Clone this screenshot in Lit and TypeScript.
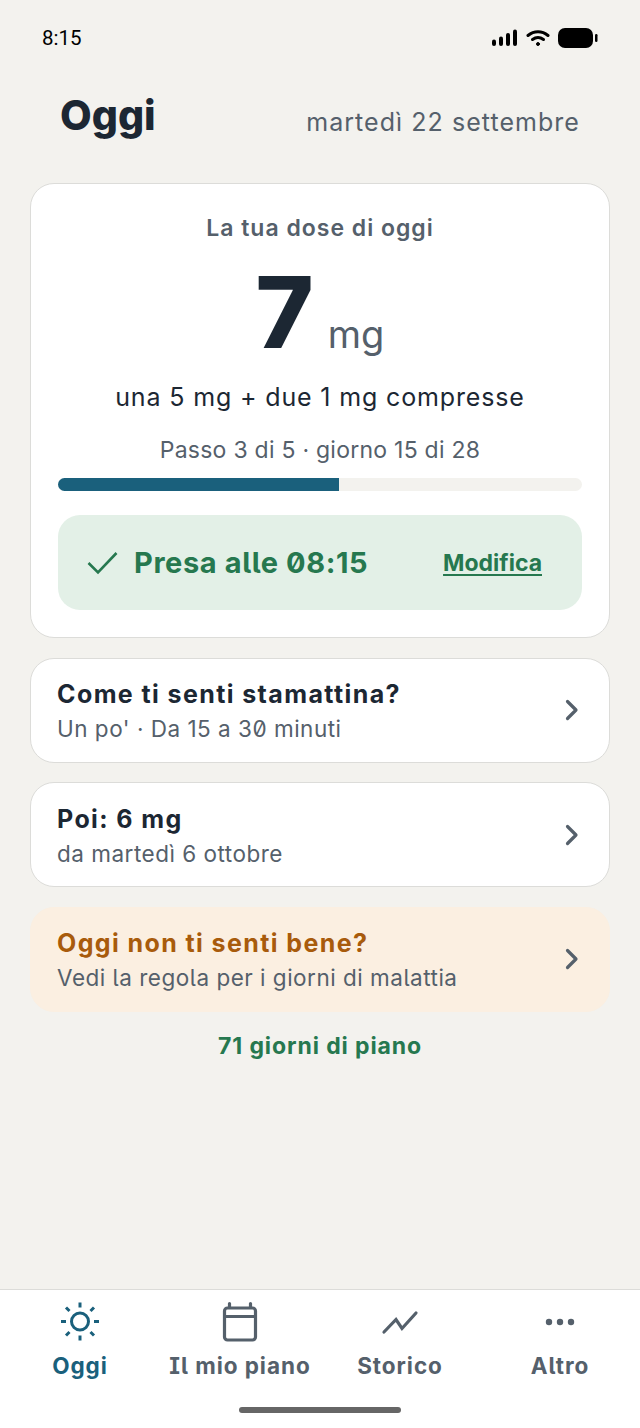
import { css, html, LitElement } from 'lit';
import { customElement } from 'lit/decorators.js';

const chevron = html`<svg class="chevron" viewBox="0 0 14 22" width="14" height="22" fill="none" stroke="#55606b" stroke-width="3.200" stroke-linecap="round" stroke-linejoin="round"><path d="M2.500 2.500 11 11l-8.500 8.500"/></svg>`;

@customElement('app-root')
export class AppRoot extends LitElement {
  static override styles = css`
    :host {
      display: block;
      width: 640px;
      height: 1428px;
      background: #f3f2ee;
      font-family: Inter, 'Liberation Sans', sans-serif;
      font-feature-settings: 'ss02', 'cv05', 'cv08', 'zero';
      color: #1c2733;
    }

    .page {
      height: 100%;
      display: flex;
      flex-direction: column;
    }

    .status {
      height: 76px;
      flex: none;
      padding: 0 42px;
      display: flex;
      align-items: center;
      justify-content: space-between;
      color: #000;
      font: 400 20.500px Roboto, sans-serif;
      font-feature-settings: normal;
    }

    .status-icons {
      display: flex;
      align-items: center;
      gap: 8px;
      margin-left: -1px;
    }

    .header {
      flex: none;
      height: 107px;
      padding: 0 60px;
      display: flex;
      align-items: center;
      justify-content: space-between;
    }

    .header h1 {
      margin: -30px 0 0 0;
      font-size: 41px;
      font-weight: 800;
      font-feature-settings: normal;
    }

    .date {
      margin-top: -16px;
      font-size: 25px;
      letter-spacing: 1.050px;
      color: #55606b;
    }

    .content {
      flex: 1;
      padding: 0 30px;
      display: flex;
      flex-direction: column;
      gap: 19.500px;
    }

    .card {
      background: #fff;
      border: 1.500px solid #dcdcd9;
      border-radius: 24px;
      box-sizing: border-box;
    }

    .dose {
      height: 455px;
      padding: 0 27px;
      display: flex;
      flex-direction: column;
      align-items: stretch;
      text-align: center;
    }

    .dose-title {
      margin-top: 28px;
      font-size: 23px;
      line-height: 32px;
      font-weight: 600;
      letter-spacing: 1px;
      color: #55606b;
    }

    .amount {
      margin-top: 22px;
      height: 92px;
      display: flex;
      justify-content: center;
      align-items: baseline;
      gap: 14px;
      line-height: 92px;
    }

    .amount b {
      font-size: 99px;
      font-weight: 800;
    }

    .amount span {
      font-size: 38px;
      color: #55606b;
    }

    .pills {
      margin-top: 22px;
      font-size: 25px;
      line-height: 34px;
      letter-spacing: 0.850px;
    }

    .step {
      margin-top: 20px;
      font-size: 23px;
      line-height: 32px;
      letter-spacing: 0.250px;
      color: #55606b;
    }

    .track {
      margin-top: 12px;
      height: 13px;
      border-radius: 7px;
      background: #f3f2ee;
      overflow: hidden;
    }

    .fill {
      height: 100%;
      background: #1a607c;
    }

    .taken {
      margin-top: 24px;
      height: 95px;
      border-radius: 22px;
      background: #e3f0e7;
      padding: 0 40px 0 27px;
      display: flex;
      align-items: center;
      color: #26784f;
    }

    .taken svg {
      flex: none;
    }

    .taken strong {
      margin-left: 16px;
      font-size: 29px;
      font-weight: 700;
      letter-spacing: 0.600px;
    }

    .taken a {
      margin-left: auto;
      font-size: 23px;
      font-weight: 700;
      text-decoration: underline;
      text-underline-offset: 3px;
    }

    .row {
      height: 105px;
      padding: 2px 30px 0 26px;
      display: flex;
      align-items: center;
      justify-content: space-between;
    }

    .chevron {
      margin-top: -2px;
    }

    .row-title {
      font-size: 25px;
      line-height: 34px;
      font-weight: 700;
      letter-spacing: 1.400px;
    }

    .row-sub {
      margin-top: 2px;
      font-size: 22.500px;
      line-height: 32px;
      letter-spacing: 0.500px;
      color: #55606b;
    }

    .warn {
      background: #fbefe1;
      border-color: #fbefe1;
    }

    .warn .row-title {
      color: #a85b0c;
    }

    .plan {
      margin-top: -1px;
      text-align: center;
      font-size: 23px;
      line-height: 32px;
      font-weight: 700;
      letter-spacing: 0.900px;
      color: #26784f;
    }

    nav {
      flex: none;
      height: 139px;
      box-sizing: border-box;
      background: #fff;
      border-top: 1.500px solid #dcdcd9;
      position: relative;
      display: grid;
      grid-template-columns: repeat(4, 1fr);
    }

    .tab {
      padding-top: 10px;
      display: flex;
      flex-direction: column;
      align-items: center;
      font-size: 22.500px;
      line-height: 30px;
      font-weight: 700;
      letter-spacing: 0.950px;
      color: #55606b;
    }

    .tab svg {
      height: 44px;
      width: 44px;
      margin-bottom: 7px;
    }

    .tab.active {
      color: #1a607c;
    }

    .home-bar {
      position: absolute;
      left: 239px;
      bottom: 15px;
      width: 162px;
      height: 6px;
      border-radius: 3px;
      background: #666;
    }
  `;

  override render() {
    return html`
      <div class="page">
        <div class="status">
          <span>8:15</span>
          <span class="status-icons">
            <svg width="27" height="18" viewBox="0 0 27 18" fill="#000"><rect x="1" y="10.500" width="4" height="6.500" rx="2"/><rect x="8" y="7.500" width="4" height="9.500" rx="2"/><rect x="15" y="4" width="4" height="13" rx="2"/><rect x="22" y="0.500" width="4" height="16.500" rx="2"/></svg>
            <svg width="24" height="18" viewBox="0 0 24 18" fill="none" stroke="#000" stroke-width="3" stroke-linecap="round"><path d="M2 6.500c6-5 14-5 20 0"/><path d="M6.500 10.500c3.300-2.500 7.700-2.500 11 0"/><circle cx="12" cy="15" r="1.500" fill="#000" stroke-width="1"/></svg>
            <svg width="40" height="20" viewBox="0 0 40 20" fill="#000"><rect x="0" y="0" width="35" height="20" rx="7"/><rect x="37" y="6" width="2.500" height="8" rx="1.200"/></svg>
          </span>
        </div>
        <header class="header">
          <h1>Oggi</h1>
          <span class="date">martedì 22 settembre</span>
        </header>
        <main class="content">
          <section class="card dose">
            <div class="dose-title">La tua dose di oggi</div>
            <div class="amount"><b>7</b><span>mg</span></div>
            <div class="pills">una 5 mg + due 1 mg compresse</div>
            <div class="step">Passo 3 di 5 · giorno 15 di 28</div>
            <div class="track"><div class="fill" style="width: ${(15 / 28) * 100}%"></div></div>
            <div class="taken">
              <svg width="33" height="26" viewBox="0 0 33 26" fill="none" stroke="#26784f" stroke-width="2.600"><path d="M3.500 13l9.500 9.500L31.500 3"/></svg>
              <strong>Presa alle 08:15</strong>
              <a>Modifica</a>
            </div>
          </section>
          <section class="card row">
            <div>
              <div class="row-title">Come ti senti stamattina?</div>
              <div class="row-sub">Un po' · Da 15 a 30 minuti</div>
            </div>
            ${chevron}
          </section>
          <section class="card row">
            <div>
              <div class="row-title">Poi: 6 mg</div>
              <div class="row-sub">da martedì 6 ottobre</div>
            </div>
            ${chevron}
          </section>
          <section class="card row warn">
            <div>
              <div class="row-title">Oggi non ti senti bene?</div>
              <div class="row-sub">Vedi la regola per i giorni di malattia</div>
            </div>
            ${chevron}
          </section>
          <div class="plan">71 giorni di piano</div>
        </main>
        <nav>
          <div class="tab active">
            <svg viewBox="0 0 44 44" fill="none" stroke="#1a607c" stroke-width="3"><circle cx="22" cy="21.500" r="8.500"/><path d="M22 2.500v5M22 35.500v5M3 21.500h5M36 21.500h5M8 7.500l3.500 3.500M32.500 32l3.500 3.500M8 35.500l3.500-3.500M32.500 11l3.500-3.500"/></svg>
            Oggi
          </div>
          <div class="tab">
            <svg viewBox="0 0 44 44" fill="none" stroke="#55606b" stroke-width="3.200" stroke-linecap="round" stroke-linejoin="round"><rect x="6.500" y="8" width="31" height="32" rx="3"/><path d="M6.500 16.500h31M11.500 3.500v4M32.500 3.500v4"/></svg>
            Il mio piano
          </div>
          <div class="tab">
            <svg viewBox="0 0 44 44" fill="none" stroke="#55606b" stroke-width="3.200" stroke-linecap="round"><path d="M6 32l12-12.500 6 9L38 13"/></svg>
            Storico
          </div>
          <div class="tab">
            <svg viewBox="0 0 44 44" fill="#55606b"><circle cx="11" cy="22" r="3.200"/><circle cx="22" cy="22" r="3.200"/><circle cx="33" cy="22" r="3.200"/></svg>
            Altro
          </div>
          <div class="home-bar"></div>
        </nav>
      </div>
    `;
  }
}
